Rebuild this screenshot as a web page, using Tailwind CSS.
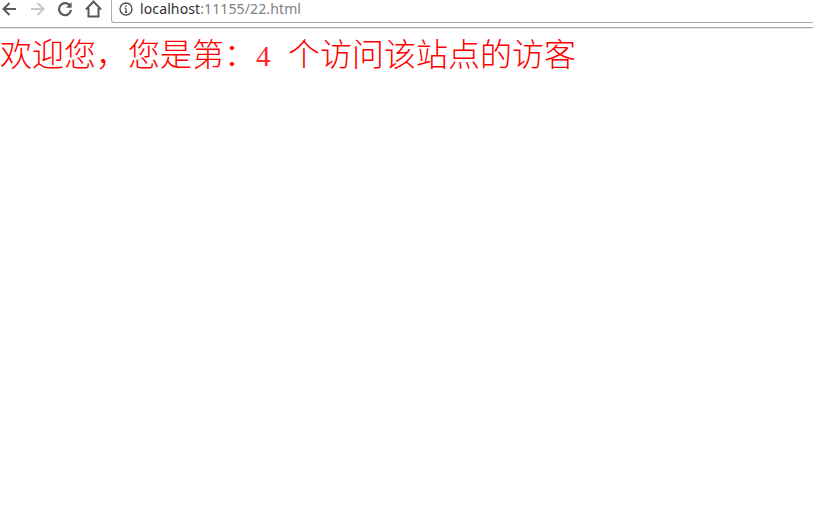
<!DOCTYPE html>
<html lang="zh-CN">
<head>
<meta charset="utf-8">
<script src="https://cdn.jsdelivr.net/npm/@tailwindcss/browser@4"></script>
<title>22.html</title>
</head>
<body class="bg-white overflow-hidden">
<div class="h-[508px] w-[813px] flex flex-col">
  <div class="h-[28px] flex items-start border-b border-[#ababab] shadow-[0_1px_0_#e8e8e8]">
    <div class="flex items-center h-[23px] w-[111px] shrink-0 relative">
      <svg class="absolute left-[1px] top-[1px]" width="16" height="16" viewBox="0 0 16 16" fill="none" stroke="#5a5a5a" stroke-width="2"><path d="M15 8H2.5M8.5 2 2.5 8l6 6"/></svg>
      <svg class="absolute left-[30px] top-[1px]" width="16" height="16" viewBox="0 0 16 16" fill="none" stroke="#c8c8c8" stroke-width="2"><path d="M1 8h12.5M7.5 2l6 6-6 6"/></svg>
      <svg class="absolute left-[57px] top-[1px]" width="16" height="16" viewBox="0 0 16 16" fill="none" stroke="#5a5a5a" stroke-width="2.2"><path d="M13.3 5.2A6 6 0 1 0 14 9"/><path d="M14.6 1.2v5.6H9z" fill="#5a5a5a" stroke="none"/></svg>
      <svg class="absolute left-[85px] top-0" width="17" height="18" viewBox="0 0 17 18" fill="none" stroke="#5a5a5a" stroke-width="2"><path d="M1 9.5 8.5 1.5l7.5 8"/><path d="M3.5 8v8.5h10V8"/></svg>
    </div>
    <div class="h-[23px] flex-1 border-l border-b border-[#ababab] rounded-bl-[3px] flex items-center pl-[7px] pb-[5px]">
      <svg class="shrink-0" width="14" height="14" viewBox="0 0 14 14" fill="none" stroke="#4a4a4a" stroke-width="1.3"><circle cx="7" cy="7" r="6"/><path d="M7 6v4.4M5.8 10.4h2.4M5.8 6.2H7" stroke-width="1.2"/><path d="M7 3.2v1.5" stroke-width="1.4"/></svg>
      <span class="ml-[7px] text-[14px] leading-[16px] tracking-[0.12px] font-['Noto_Sans','Liberation_Sans',sans-serif] text-[#303030]">localhost<span class="text-[#808080]">:11155/22.html</span></span>
    </div>
  </div>
  <p class="h-[36px] text-[32px] leading-[36px] text-[#ff0000] whitespace-nowrap font-light font-['Noto_Sans_CJK_SC','Liberation_Serif',serif] mt-[6px]">欢迎您&#xFF0C;您是第&#xFF1A;<span class="inline-block w-[32px] text-[29px] text-[#ff2a2a] font-['Liberation_Serif',serif] font-normal">4</span>个访问该站点的访客</p>
</div>
</body>
</html>
